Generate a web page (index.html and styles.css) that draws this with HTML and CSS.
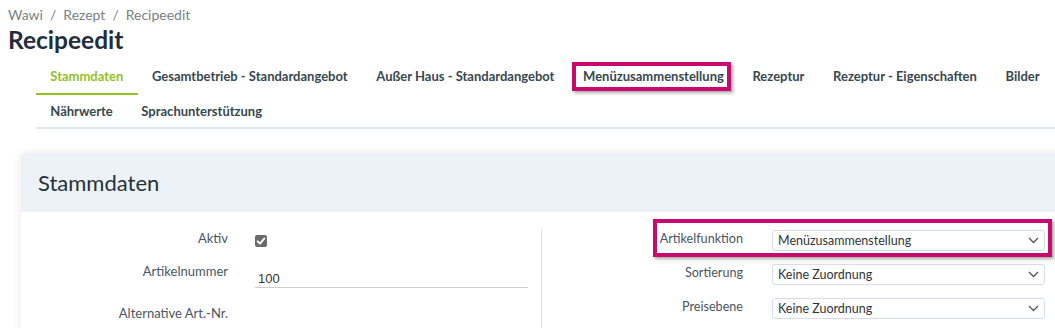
FILE: index.html
```html
<!DOCTYPE html>
<html lang="de">
<head>
  <meta charset="UTF-8">
  <title>Recipeedit</title>
  <link rel="stylesheet" href="styles.css">
</head>
<body>
  <div class="breadcrumb">
    <span>Wawi</span><span class="sep">/</span><span>Rezept</span><span class="sep">/</span><span>Recipeedit</span>
  </div>
  <h1 class="page-title">Recipeedit</h1>

  <ul class="tabs">
    <li class="tab active">Stammdaten</li>
    <li class="tab">Gesamtbetrieb - Standardangebot</li>
    <li class="tab">Außer Haus - Standardangebot</li>
    <li class="tab marked">Menüzusammenstellung</li>
    <li class="tab">Rezeptur</li>
    <li class="tab">Rezeptur - Eigenschaften</li>
    <li class="tab">Bilder</li>
    <li class="tab">Nährwerte</li>
    <li class="tab">Sprachunterstützung</li>
  </ul>

  <div class="card">
    <div class="card-header">Stammdaten</div>
    <div class="card-body">
      <div class="col col-left">
        <div class="row row-check">
          <label>Aktiv</label>
          <span class="checkbox">
            <svg width="12" height="12" viewBox="0 0 12 12"><path d="M2.6 6.3 L5 8.6 L9.4 3.4" fill="none" stroke="#fff" stroke-width="1.8" stroke-linecap="round" stroke-linejoin="round"/></svg>
          </span>
        </div>
        <div class="row row-input">
          <label>Artikelnummer</label>
          <input type="text" class="line-input" value="100">
        </div>
        <div class="row">
          <label>Alternative Art.-Nr.</label>
          <span></span>
        </div>
      </div>
      <div class="col col-right">
        <div class="srow marked">
          <label>Artikelfunktion</label>
          <div class="select">Menüzusammenstellung</div>
        </div>
        <div class="srow">
          <label>Sortierung</label>
          <div class="select">Keine Zuordnung</div>
        </div>
        <div class="srow">
          <label>Preisebene</label>
          <div class="select">Keine Zuordnung</div>
        </div>
      </div>
    </div>
  </div>
</body>
</html>
```

FILE: styles.css
```css
body {
  margin: 0;
  font-family: 'Lato', sans-serif;
  background: #fff;
  color: #37474f;
  overflow: hidden;
}
.breadcrumb {
  padding: 5px 8px 0;
  font-size: 14px;
  line-height: 20px;
  color: #7a7f86;
}
.breadcrumb .sep {
  padding: 0 7px;
}
.page-title {
  margin: 0;
  padding: 0 8px;
  font-size: 24.5px;
  line-height: 30px;
  font-weight: 700;
  color: #1f2d3d;
}
.tabs {
  list-style: none;
  margin: 5px 0 0 36px;
  padding: 0;
  display: flex;
  flex-wrap: wrap;
  border-bottom: 2px solid #dfe6ee;
}
.tab {
  padding: 0 14.3px;
  height: 33px;
  line-height: 33px;
  font-size: 13px;
  font-weight: 700;
  color: #37474f;
  border-bottom: 2px solid transparent;
  white-space: nowrap;
}
.tab:nth-child(n+8) {
  height: 32px;
  line-height: 32px;
  border-bottom: 0;
}
.tab.active {
  color: #94c11f;
  border-bottom-color: #94c11f;
}
.tab.marked {
  position: relative;
}
.tab.marked::after,
.srow.marked::after {
  content: "";
  position: absolute;
  border: 4px solid #c80a6e;
  box-shadow: 2px 2px 3px rgba(0,0,0,0.35);
}
.tab.marked::after {
  left: 3px;
  top: 2px;
  width: 151px;
  height: 21px;
}
.card {
  margin: 24px -40px 0 21px;
  border-radius: 5px 5px 0 0;
  box-shadow: 0 0 10px rgba(0,0,0,0.09);
  background: #fff;
}
.card-header {
  background: #edf2f9;
  border-radius: 5px 5px 0 0;
  height: 59px;
  line-height: 59px;
  padding-left: 17px;
  font-size: 22px;
  color: #263238;
}
.card-body {
  display: flex;
  padding-top: 17px;
  height: 120px;
}
.col-left {
  width: 520px;
  border-right: 1px solid #dcdfe3;
}
.row {
  display: grid;
  grid-template-columns: 207px 273px;
  column-gap: 27px;
  font-size: 13px;
  color: #4b5563;
}
.row label {
  text-align: right;
  line-height: 18px;
}
.row-check {
  height: 33px;
}
.row-input {
  height: 42px;
}
.checkbox {
  width: 12px;
  height: 12px;
  margin-top: 6px;
  border-radius: 2px;
  background: #6b6b6b;
  display: flex;
}
.line-input {
  width: 100%;
  box-sizing: border-box;
  height: 26px;
  margin: 0;
  padding: 8px 3px 0;
  border: 0;
  border-bottom: 1px solid #d0d0d0;
  font-family: 'Liberation Sans', Arial, sans-serif;
  font-size: 13px;
  color: #333;
  background: transparent;
}
.col-right {
  padding-top: 1px;
}
.srow {
  display: flex;
  align-items: center;
  column-gap: 29px;
  margin-bottom: 13px;
  font-size: 12.6px;
  color: #4b5563;
  position: relative;
}
.srow label {
  width: 201px;
  text-align: right;
  line-height: 18px;
  margin-top: -3px;
}
.srow.marked::after {
  left: 111px;
  top: -11px;
  width: 391px;
  height: 30px;
}
.select {
  width: 273px;
  height: 21px;
  box-sizing: border-box;
  border: 1px solid #d6dde8;
  border-radius: 3px;
  padding-left: 5px;
  line-height: 19px;
  font-size: 12.5px;
  color: #2f353b;
  background: #fff url("data:image/svg+xml;utf8,<svg xmlns='http://www.w3.org/2000/svg' width='11' height='7'><path d='M1 1 L5.5 5.5 L10 1' fill='none' stroke='%23555' stroke-width='1.3'/></svg>") no-repeat right 5px center;
}
```
